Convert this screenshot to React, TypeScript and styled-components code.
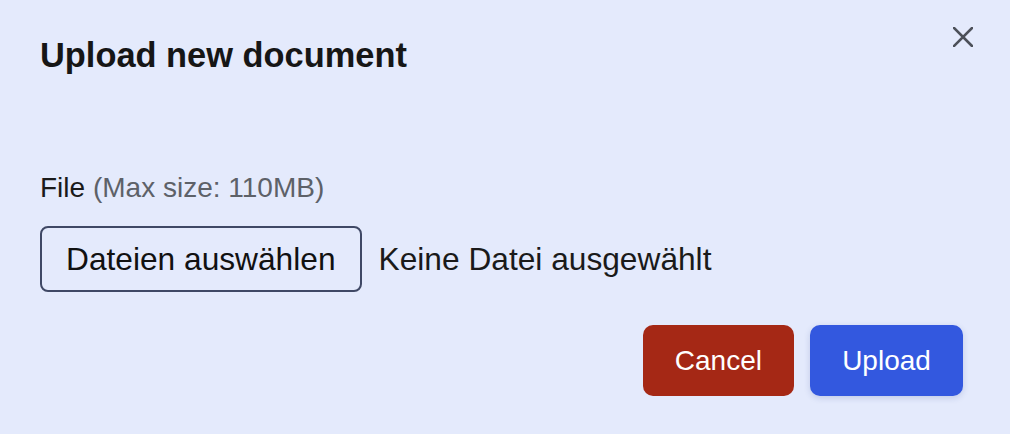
import React from "react";
import styled, { createGlobalStyle } from "styled-components";

const Global = createGlobalStyle`
  html, body { margin: 0; padding: 0; background: #e4eafc; }
  body { font-family: "Liberation Sans", Arial, sans-serif; }
  * { box-sizing: border-box; }
`;

const Dialog = styled.div`
  width: 1010px;
  height: 434px;
  background: #e4eafc;
  padding: 35px 37px 38px 40px;
  display: flex;
  flex-direction: column;
`;

const Header = styled.div`
  display: flex;
  justify-content: space-between;
  align-items: flex-start;
`;

const Title = styled.h2`
  margin: 0;
  font-size: 34.4px;
  line-height: 40px;
  font-weight: 700;
  color: #161616;
`;

const CloseButton = styled.button`
  width: 40px;
  height: 40px;
  margin-top: -18px;
  margin-right: -10px;
  border: none;
  background: transparent;
  padding: 0;
  display: flex;
  align-items: center;
  justify-content: center;
  cursor: pointer;
`;

const Field = styled.div`
  margin-top: 97px;
  display: flex;
  flex-direction: column;
  gap: 22px;
`;

const Label = styled.label`
  font-size: 28px;
  line-height: 32px;
  color: #1a1a1a;
`;

const Hint = styled.span`
  color: #5d6168;
`;

const FileRow = styled.div`
  display: flex;
  align-items: center;
  gap: 17px;
`;

const PickButton = styled.button`
  height: 66px;
  padding: 0 24px;
  border: 2px solid #3f4865;
  border-radius: 8px;
  background: transparent;
  font-family: inherit;
  font-size: 31.7px;
  color: #111;
`;

const FileName = styled.span`
  font-size: 31.7px;
  color: #1a1a1a;
`;

const Actions = styled.div`
  margin-top: 33px;
  padding-right: 10px;
  display: flex;
  justify-content: flex-end;
  gap: 16px;
`;

const ActionButton = styled.button<{ $variant: "danger" | "primary" }>`
  height: 71px;
  padding: 0 32px;
  min-width: ${(p) => (p.$variant === "danger" ? "151px" : "153px")};
  border: none;
  border-radius: 10px;
  font-family: inherit;
  font-size: 28px;
  color: #fff;
  background: ${(p) => (p.$variant === "danger" ? "#a52815" : "#3358df")};
  box-shadow: ${(p) =>
    p.$variant === "primary" ? "0 2px 6px rgba(40,60,140,0.18)" : "none"};
`;

export default function App() {
  return (
    <>
      <Global />
      <Dialog>
        <Header>
          <Title>Upload new document</Title>
          <CloseButton aria-label="Close">
            <svg width="20" height="20" viewBox="0 0 20 20">
              <path
                d="M1 1 L19 19 M19 1 L1 19"
                stroke="#4c5059"
                strokeWidth="2.6"
                strokeLinecap="square"
              />
            </svg>
          </CloseButton>
        </Header>
        <Field>
          <Label>
            File <Hint>(Max size: 110MB)</Hint>
          </Label>
          <FileRow>
            <PickButton>Dateien auswählen</PickButton>
            <FileName>Keine Datei ausgewählt</FileName>
          </FileRow>
        </Field>
        <Actions>
          <ActionButton $variant="danger">Cancel</ActionButton>
          <ActionButton $variant="primary">Upload</ActionButton>
        </Actions>
      </Dialog>
    </>
  );
}
